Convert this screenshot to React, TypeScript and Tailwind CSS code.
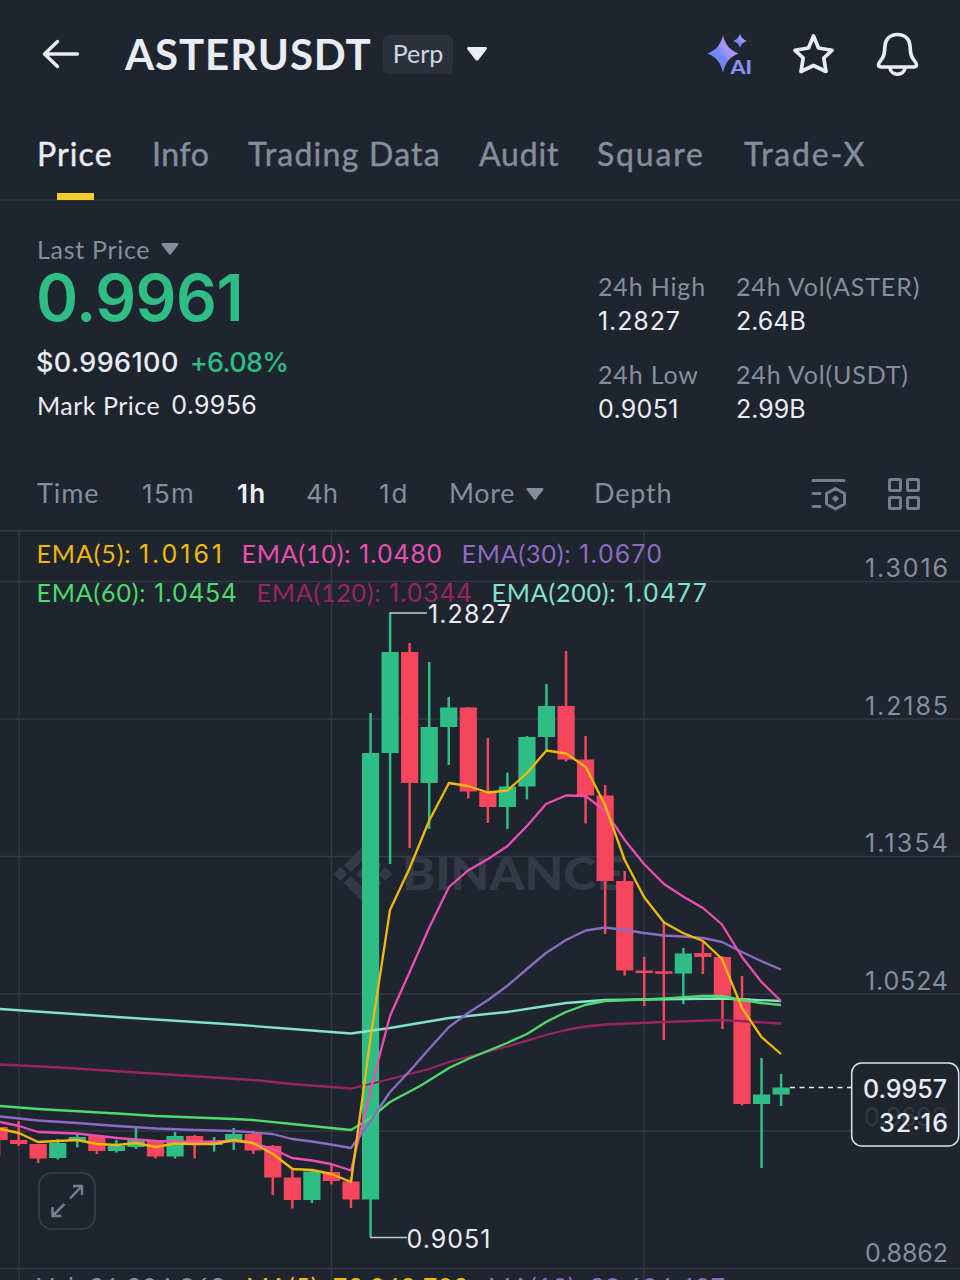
import React, { useState } from 'react';

interface Candle {
  up: boolean;
  top: number;
  bottom: number;
  high: number;
  low: number;
}

interface EmaLine {
  label: string;
  value: string;
  color: string;
  width: number;
  points: [number, number][];
}

const GREEN = '#2ebd85';
const RED = '#f6465d';
const STEP = 19.55;
const FIRST_X = -0.9;

const TABS = [
  { name: 'Price', className: 'w-[115px] tracking-[1.1px]' },
  { name: 'Info', className: 'w-[96px] tracking-[0.6px]' },
  { name: 'Trading Data', className: 'w-[231px] tracking-[1.25px]' },
  { name: 'Audit', className: 'w-[118px] tracking-[0.8px]' },
  { name: 'Square', className: 'w-[147px] tracking-[1.8px]' },
  { name: 'Trade-X', className: 'tracking-[1.8px]' },
];

// y positions are chart pixels
const c = (up: boolean, top: number, bottom: number, high: number, low: number): Candle => ({ up, top, bottom, high, low });

const CANDLES: Candle[] = [
  c(false, 1127, 1140, 1127, 1156),
  c(false, 1140, 1144, 1121, 1146),
  c(false, 1144, 1158.5, 1144, 1163),
  c(true, 1143, 1158, 1139, 1159.5),
  c(true, 1137, 1141, 1133, 1147.5),
  c(false, 1136, 1151, 1136, 1154),
  c(true, 1146, 1151, 1140, 1152.5),
  c(true, 1140, 1147, 1128, 1149),
  c(false, 1141, 1156.5, 1140, 1158.5),
  c(true, 1136, 1156.5, 1132, 1158.5),
  c(false, 1136, 1142, 1135, 1158.5),
  c(true, 1142, 1145, 1137, 1151.5),
  c(true, 1134, 1141, 1128, 1150),
  c(false, 1134, 1150.5, 1131, 1154),
  c(false, 1146, 1177.5, 1145, 1195),
  c(false, 1177.5, 1200, 1170, 1208.5),
  c(true, 1171.5, 1200, 1170, 1203),
  c(false, 1172, 1181, 1164, 1184.5),
  c(false, 1181.5, 1199.5, 1177, 1208),
  c(true, 753, 1199.5, 713, 1237),
  c(true, 652, 753, 613, 864),
  c(false, 652, 783, 643, 848),
  c(true, 727, 783, 662, 829),
  c(true, 707.5, 727, 697, 765),
  c(false, 707.5, 791.5, 707, 798.5),
  c(false, 791.5, 807, 738, 823),
  c(true, 786.5, 807, 772.5, 829),
  c(true, 737, 786.5, 736, 799.5),
  c(true, 706, 737, 684, 750),
  c(false, 706, 759.5, 651, 761.5),
  c(false, 759.5, 795.5, 736, 823.5),
  c(false, 795.5, 881, 785, 934),
  c(false, 881, 970.5, 871, 975.5),
  c(false, 970.5, 973, 957, 1006),
  c(false, 971.3, 973.8, 923, 1040),
  c(true, 953.5, 973.5, 948, 1004),
  c(false, 953, 957, 941, 974),
  c(false, 957, 998, 956, 1029),
  c(false, 998, 1104, 976, 1105.5),
  c(true, 1094.5, 1104, 1058, 1168),
  c(true, 1087.5, 1094.5, 1074, 1106),
];

const EMAS: EmaLine[] = [
  {
    label: 'EMA(5):', value: '1.0161', color: '#f0b90b', width: 185,
    points: [[0, 1129], [19, 1133], [38, 1142], [58, 1141], [77, 1140], [97, 1144], [117, 1145], [136, 1143], [156, 1147], [175, 1143.5], [195, 1144], [214, 1144], [234, 1140], [253, 1143], [273, 1154], [292.6, 1169], [312, 1170], [331.5, 1174], [351, 1182], [370.5, 1038], [390, 910], [409.7, 868], [429, 821], [449, 783], [468, 786], [488, 792.5], [507.5, 790.5], [527, 773], [546.5, 750.5], [566, 753.5], [585.7, 767], [605, 805], [624.7, 860], [644, 897], [664, 922.5], [683, 933], [703, 941], [722, 959], [742, 1008], [761.5, 1037], [781, 1054]],
  },
  {
    label: 'EMA(10):', value: '1.0480', color: '#eb4fb4', width: 200,
    points: [[0, 1122], [19, 1126], [38, 1132], [77, 1133.5], [117, 1138], [156, 1141], [195, 1142], [234, 1141], [253, 1143], [273, 1149], [292, 1158], [312, 1160.5], [331, 1164], [351, 1170.5], [370.5, 1090], [390, 1016], [409.7, 972], [429, 928], [449, 887], [468, 870.5], [488, 859], [507.5, 846], [527, 826], [546, 804], [566, 795.5], [585.7, 796], [605, 811], [624.7, 840], [644, 864], [664, 884], [683, 896.5], [703, 908], [722, 924.5], [742, 957], [761.5, 982], [781, 1001]],
  },
  {
    label: 'EMA(30):', value: '1.0670', color: '#8d6bc4', width: 200,
    points: [[0, 1116.5], [38, 1120.5], [77, 1123], [117, 1126], [156, 1128.5], [195, 1130], [234, 1131], [273, 1134], [292, 1139], [312, 1141.5], [331, 1144.5], [351, 1148], [370.5, 1121], [390, 1092], [409.7, 1071], [429, 1049], [449, 1027], [468, 1013], [488, 1000], [507, 986], [527, 969], [546, 953], [566, 940], [585.7, 930.5], [605, 927.5], [624.7, 930], [644, 933], [664, 935.5], [683, 936.5], [703, 938], [722, 942], [742, 952], [761, 961], [781, 969.5]],
  },
  {
    label: 'EMA(60):', value: '1.0454', color: '#4ddb6b', width: 200,
    points: [[0, 1106], [38, 1109], [117, 1113.5], [156, 1116], [195, 1117.5], [234, 1119], [253, 1120], [292, 1124], [351, 1130], [370.5, 1118], [390, 1102], [420, 1086], [449, 1068], [468, 1059], [507, 1043], [527, 1034], [546, 1022], [566, 1012], [585, 1005], [605, 1001], [644, 999.5], [664, 998.5], [703, 996], [722, 996], [742, 1000], [761, 1003], [781, 1005]],
  },
  {
    label: 'EMA(120):', value: '1.0344', color: '#9b2460', width: 215,
    points: [[0, 1064.5], [60, 1067.5], [160, 1074], [260, 1080.5], [292, 1084], [351, 1088.5], [370.5, 1084], [390, 1079], [429, 1069], [449, 1062], [468, 1057], [507, 1046.5], [546, 1035], [566, 1030], [585, 1026.5], [605, 1024.5], [664, 1022], [722, 1020], [781, 1023.5]],
  },
  {
    label: 'EMA(200):', value: '1.0477', color: '#83e2ca', width: 215,
    points: [[0, 1009], [117, 1017], [234, 1024.5], [292, 1029], [351, 1033.5], [390, 1028], [449, 1018], [507, 1012], [546, 1006], [566, 1003], [605, 1000], [722, 998.5], [781, 1001]],
  },
];

const AXIS = [
  { label: '1.3016', line: 581.5, y: 577 },
  { label: '1.2185', line: 719, y: 715 },
  { label: '1.1354', line: 856.5, y: 852 },
  { label: '1.0524', line: 994, y: 989.5 },
  { label: '', line: 1131, y: 0 },
  { label: '0.8862', line: 1268.5, y: 1261.5 },
];

const NUM = 'Inter, Roboto, sans-serif';

function Caret({ className }: { className: string }) {
  return (
    <svg viewBox="0 0 22 15" className={className} fill="currentColor">
      <path d="M2 0h18c1.500 0 2.200 1.500 1.200 2.600l-8.700 11.200c-.8 1-2.200 1-3 0L.8 2.600C-.2 1.500.5 0 2 0z" />
    </svg>
  );
}

function Header() {
  return (
    <header className="flex h-[108px] items-center pr-[41px] pl-[42px]">
      <svg viewBox="0 0 38 30" className="h-[30px] w-[38px] shrink-0" fill="none" stroke="#eaecf5" strokeWidth="3.400" strokeLinecap="round" strokeLinejoin="round">
        <path d="M35.500 15H2.500M15.500 2.500L2.500 15 15.500 27.500" />
      </svg>
      <h1 className="ml-[45px] w-[258px] text-[42px] leading-[50px] font-bold tracking-[0.900px] whitespace-nowrap text-[#eaecf5]">ASTERUSDT</h1>
      <span className="flex h-[39px] w-[70px] items-center justify-center rounded-[5px] bg-[#2b313b] text-[25px] text-[#d3d7e0]">Perp</span>
      <Caret className="ml-[13px] h-[14px] w-[22px] text-[#eaecf5]" />

      <div className="ml-auto flex items-center">
        <svg viewBox="0 0 46 44" className="h-[44px] w-[46px] overflow-visible">
          <defs>
            <linearGradient id="ai" x1="0" y1="1" x2="1" y2="0">
              <stop offset="0.45" stopColor="#7387fb" />
              <stop offset="0.6" stopColor="#a693f5" />
            </linearGradient>
          </defs>
          <path fill="url(#ai)" d="M15 3.500c2.500 9 6 14 15.500 18-9.500 4-13 9-15.500 19-2.500-10-6-15-15.500-19C9 17.500 12.500 12.500 15 3.500z" />
          <path fill="url(#ai)" d="M32 2c1.500 3.700 3 5.300 6.800 7-3.800 1.500-5.300 3-6.800 6.800-1.500-3.800-3-5.300-6.800-6.800 3.800-1.700 5.300-3.300 6.800-7z" />
          <text x="22.500" y="42.300" fontSize="19.500" fontWeight="900" fill="#8590f8" stroke="#1f252f" strokeWidth="2" paintOrder="stroke" textLength="21.500" lengthAdjust="spacingAndGlyphs">AI</text>
        </svg>
        <svg viewBox="0 0 42 42" className="ml-[38px] h-[42px] w-[42px]" fill="none" stroke="#eaecf5" strokeWidth="3.700" strokeLinejoin="round">
          <path d="M21.500 3L26.500 15 40 17.300 31.800 25 34 38.500 21.500 32.500 9 38.500 11.200 25 3 17.300 16.500 15z" />
        </svg>
        <svg viewBox="0 0 43 44" className="ml-[42px] h-[44px] w-[43px]" fill="none" stroke="#eaecf5" strokeWidth="3.600" strokeLinejoin="round">
          <path d="M21.500 2.500c-7.500 0-12.300 4.800-12.600 12-.3 6.500-.6 9.500-3.400 13-1.600 2-3 3.400-3 5.300 0 1.700 1.200 2.200 3 2.200h32c1.800 0 3-.5 3-2.200 0-1.900-1.400-3.300-3-5.300-2.800-3.500-3.100-6.500-3.400-13-.3-7.200-5.100-12-12.600-12z" />
          <path d="M13.800 35.500c.6 4 3.700 6.700 7.700 6.700s7.100-2.700 7.700-6.700" />
        </svg>
      </div>
    </header>
  );
}

function Stat({ label, value, className }: { label: string; value: string; className: string }) {
  return (
    <div className="flex flex-col">
      <span className="text-[25px] leading-[34px] tracking-[0.850px] whitespace-nowrap text-[#848e9c]">{label}</span>
      <span className={`mt-[2px] font-[Inter] text-[25px] leading-[32px] text-[#eaecf5] ${className}`}>{value}</span>
    </div>
  );
}

function PriceSummary() {
  return (
    <section className="flex h-[259px] justify-between pt-[31px] pr-[37px] pl-[37px]">
      <div className="flex flex-col">
        <div className="flex items-center text-[25px] leading-[34px] tracking-[0.700px] text-[#848e9c]">
          Last Price
          <Caret className="ml-[11px] h-[12px] w-[18px]" />
        </div>
        <div className="-ml-px font-[Inter] text-[64px] leading-[64px] font-semibold tracking-[-0.500px] text-[#2ebd85]">0.9961</div>
        <div className="mt-[16px] flex gap-[11px] font-[Inter] text-[27px] leading-[34px] font-medium">
          <span className="-ml-px tracking-[0.400px] text-[#eaecf5]">$0.996100</span>
          <span className="tracking-[-0.700px] text-[#2ebd85]">+6.08%</span>
        </div>
        <div className="mt-[8px] flex gap-[11px] text-[25px] leading-[34px] text-[#eaecf5]">
          <span className="tracking-[0.500px]">Mark Price</span>
          <span className="font-[Inter] text-[25px] tracking-[0.300px]">0.9956</span>
        </div>
      </div>
      <div className="mt-[37px] grid h-[156px] grid-cols-[138px_187px] gap-y-[20px]">
        <Stat label="24h High" value="1.2827" className="tracking-[0.900px]" />
        <Stat label="24h Vol(ASTER)" value="2.64B" className="" />
        <Stat label="24h Low" value="0.9051" className="tracking-[0.300px]" />
        <Stat label="24h Vol(USDT)" value="2.99B" className="" />
      </div>
    </section>
  );
}

function IntervalBar() {
  const [interval, setInterval] = useState('1h');
  const items = [
    { name: 'Time', width: 'w-[105px]', font: 'tracking-[0.900px]' },
    { name: '15m', width: 'w-[95px]', font: 'font-[Inter] text-[26px] tracking-[1.300px]' },
    { name: '1h', width: 'w-[69px]', font: 'font-[Inter] text-[26px] tracking-[1.300px]' },
    { name: '4h', width: 'w-[73px]', font: 'font-[Inter] text-[26px]' },
    { name: '1d', width: 'w-[70px]', font: 'font-[Inter] text-[26px] tracking-[1.800px]' },
  ];
  return (
    <nav className="flex h-[70px] items-center pr-[39px] pb-[3px] pl-[37px] text-[27px] text-[#848e9c]">
      {items.map(item => (
        <button
          key={item.name}
          onClick={() => setInterval(item.name)}
          className={`text-left ${item.width} ${item.font} ${interval === item.name ? 'font-semibold text-[#eaecf5]' : ''}`}
        >
          {item.name}
        </button>
      ))}
      <button className="flex w-[145px] items-center tracking-[0.700px]">
        More
        <Caret className="ml-[11px] h-[12px] w-[18px]" />
      </button>
      <button className="tracking-[0.800px]">Depth</button>
      <svg viewBox="0 0 36 34" className="ml-auto h-[34px] w-[36px]" fill="none" stroke="#757e8c" strokeWidth="3" strokeLinecap="round" strokeLinejoin="round">
        <path d="M2 3.500h31M2 16.500h7M2 29.500h7M24.500 11.500l9 5v10.500l-9 5-9-5V16.500z" />
        <path d="M24.500 18.800l3 3-3 3-3-3z" fill="#757e8c" strokeWidth="1" />
      </svg>
      <svg viewBox="0 0 34 34" className="ml-[40px] h-[34px] w-[34px]" fill="none" stroke="#757e8c" strokeWidth="3">
        <rect x="2.500" y="2.500" width="11" height="11" rx="1" />
        <rect x="20.500" y="2.500" width="11" height="11" rx="1" />
        <rect x="2.500" y="20.500" width="11" height="11" rx="1" />
        <rect x="20.500" y="20.500" width="11" height="11" rx="1" />
      </svg>
    </nav>
  );
}

function Legend({ lines }: { lines: EmaLine[] }) {
  return (
    <div className="flex h-[39px] items-center gap-[20px]">
      {lines.map(line => (
        <svg key={line.label} width={line.width} height="39" className="overflow-visible" fill={line.color} fontSize="25">
          <text x="-0.500" y="28.500" textLength={line.width - 91} lengthAdjust="spacing">{line.label}</text>
          <text x={line.width - 83} y="28.500" fontFamily={NUM} textLength="83" lengthAdjust="spacing">{line.value}</text>
        </svg>
      ))}
    </div>
  );
}

function Chart() {
  return (
    <section className="relative h-[750px] overflow-hidden">
      <svg viewBox="0 530 960 750" className="block h-[750px] w-[960px]" fontSize="25">
        <g stroke="#323943" strokeWidth="1.500">
          <path d="M0 530.750H960M19 530V1280M331.500 530V1280M644 530V1280" />
          {AXIS.map(a => <path key={a.line} d={`M0 ${a.line}H960`} />)}
        </g>

        {/* Watermark */}
        <g fill="#343a45">
          <path d="M363 846l19 19-7 7-12-12-12 12-7-7zM363 902l19-19-7-7-12 12-12-12-7 7zM340.500 867l7 7-7 7-7-7zM385.500 867l7 7-7 7-7-7zM363 867l7 7-7 7-7-7z" />
          <text x="402" y="890" fontSize="45" fontWeight="900" textLength="223" lengthAdjust="spacingAndGlyphs">BINANCE</text>
        </g>

        {CANDLES.map((candle, i) => {
          const x = FIRST_X + i * STEP;
          return (
            <g key={i} fill={candle.up ? GREEN : RED}>
              <rect x={x - 1.25} y={candle.high} width="2.500" height={candle.low - candle.high} />
              <rect x={x - 8.6} y={candle.top} width="17.200" height={candle.bottom - candle.top} />
            </g>
          );
        })}

        {[...EMAS].reverse().map(line => (
          <polyline key={line.label} points={line.points.map(p => p.join(',')).join(' ')} fill="none" stroke={line.color} strokeWidth="2.300" strokeLinejoin="round" />
        ))}

        {/* High and low markers */}
        <g stroke="#c5cad3" strokeWidth="1.500" fill="none">
          <path d="M389.500 613H427M370 1237.500H407" />
          <path d="M790 1087.500H852" stroke="#eaecf5" strokeDasharray="5 4.500" />
        </g>

        {AXIS.filter(a => a.label).map(a => (
          <text key={a.label} x="865" y={a.y} fontFamily={NUM} fill="#848e9c" textLength="83" lengthAdjust="spacing">{a.label}</text>
        ))}

        {/* Current price tag */}
        <rect x="851.700" y="1063" width="107" height="83" rx="10" fill="#1f252f" stroke="#dfe2ea" strokeWidth="1.500" />
        <text x="864" y="1126" fontFamily={NUM} fill="#323842" textLength="83" lengthAdjust="spacing">0.9693</text>
        <g fill="#eaecf5" fontFamily={NUM} fontWeight="500">
          <text x="863" y="1097.500" textLength="84" lengthAdjust="spacing">0.9957</text>
          <text x="879" y="1132" textLength="69" lengthAdjust="spacing">32:16</text>
        </g>

        {/* Volume legend */}
        <text x="37" y="1295.500" fill="#848e9c" textLength="188">Vol: 31,294,968</text>
        <text x="246" y="1295.500" fill="#f0b90b" textLength="222">MA(5): 73,948,793</text>
        <text x="488" y="1295.500" fill="#8d6bc4" textLength="237">MA(10): 89,694,407</text>
      </svg>

      <div className="absolute top-[4px] left-[37px]">
        <Legend lines={EMAS.slice(0, 3)} />
        <Legend lines={EMAS.slice(3)} />
      </div>

      <svg viewBox="0 530 960 750" className="pointer-events-none absolute top-0 left-0 h-[750px] w-[960px]" fontSize="25" fontFamily={NUM} fill="#eaecf5">
        <text x="428" y="622.500" textLength="83" lengthAdjust="spacing">1.2827</text>
        <text x="406.500" y="1247.500" textLength="84" lengthAdjust="spacing">0.9051</text>
      </svg>

      <button className="absolute top-[642px] left-[38px] flex h-[58px] w-[58px] items-center justify-center rounded-[14px] border-2 border-[#343b46] bg-[#1f252f]">
        <svg viewBox="0 0 34 34" className="h-[34px] w-[34px]" fill="none" stroke="#757e8c" strokeWidth="2.500">
          <path d="M20 14.500L32 2M23 2h9v9M14.500 20L2.500 32M11.500 32h-9v-9" />
        </svg>
      </button>
    </section>
  );
}

export default function App() {
  const [tab, setTab] = useState('Price');

  return (
    <main className="h-[1280px] w-[960px] overflow-hidden bg-[#1f252f] font-[Lato,sans-serif]">
      <Header />
      <nav className="flex h-[93px] items-stretch border-b-2 border-[#2a303b] pl-[37px]">
        {TABS.map(t => (
          <button
            key={t.name}
            onClick={() => setTab(t.name)}
            className={`relative text-left text-[32px] leading-[91px] whitespace-nowrap [-webkit-text-stroke:0.4px] ${t.className} ${tab === t.name ? 'text-[#eaecf5]' : 'text-[#848e9c]'}`}
          >
            {t.name}
            {tab === t.name && <span className="absolute -bottom-px left-[20px] h-[7px] w-[37px] bg-[#f5cb2d]" />}
          </button>
        ))}
      </nav>
      <PriceSummary />
      <IntervalBar />
      <Chart />
    </main>
  );
}
